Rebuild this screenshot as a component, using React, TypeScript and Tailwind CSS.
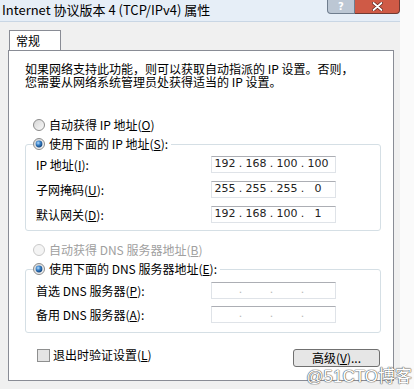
import type { ReactNode } from "react";

const cjk = "font-['Noto_Sans_CJK_SC',sans-serif]";

function Radio({ checked, disabled }: { checked?: boolean; disabled?: boolean }) {
  return (
    <svg width="12" height="12" viewBox="0 0 12 12" className="shrink-0">
      <defs>
        <linearGradient id="rg" x1="0" y1="0" x2="1" y2="1">
          <stop offset="0" stopColor="#d4d4d4" />
          <stop offset="1" stopColor="#fbfbfb" />
        </linearGradient>
        <radialGradient id="rb" cx="0.38" cy="0.35" r="0.7">
          <stop offset="0" stopColor="#b5ddff" />
          <stop offset="0.45" stopColor="#3a82c8" />
          <stop offset="1" stopColor="#0f3f77" />
        </radialGradient>
      </defs>
      <circle
        cx="6"
        cy="6"
        r="5.5"
        fill={disabled ? "#f4f4f4" : "url(#rg)"}
        stroke={disabled ? "#c9c9c9" : "#8b8b8b"}
      />
      {checked && <circle cx="6" cy="6" r="3.4" fill="url(#rb)" />}
    </svg>
  );
}

function Acc({ k }: { k: string }) {
  return (
    <>
      (<span className="underline">{k}</span>)
    </>
  );
}

function IpBox({ parts }: { parts?: string[] }) {
  return (
    <div className="flex h-[17px] w-[125px] items-center border border-[#dfe3e8] border-t-[#acaeb4] bg-white font-['DejaVu_Sans',sans-serif] text-[11px] text-[#222]">
      {[0, 1, 2, 3].map((i) => (
        <div key={i} className="flex items-center">
          {i > 0 && (
            <span className={`w-[5px] text-center ${parts ? "" : "text-[#b8b8b8]"}`}>.</span>
          )}
          <span className="w-[26px] text-center">{parts ? parts[i] : ""}</span>
        </div>
      ))}
    </div>
  );
}

function Row({ label, parts }: { label: ReactNode; parts?: string[] }) {
  return (
    <div className="flex h-[17px] items-center">
      <div className="w-[175px] whitespace-nowrap">{label}</div>
      <IpBox parts={parts} />
    </div>
  );
}

export default function App() {
  return (
    <div className={`relative flex h-[389px] w-[414px] overflow-hidden bg-[#fafafa] text-[12px] text-black ${cjk}`}>
      <div className="flex h-full w-[400px] flex-col bg-[#f0f0f0]">
        {/* title bar */}
        <div className="flex h-[22px] shrink-0 items-start border-b border-[#c9d6e4] bg-[#e6eef7]">
          <div className="pl-[2px] pt-[1px] text-[13px] leading-[18px] whitespace-nowrap text-black">
            Internet 协议版本 4 (TCP/IPv4) 属性
          </div>
          <div className="ml-auto flex shrink-0">
            <div className="flex h-[14px] w-[28px] items-center justify-center rounded-bl-[4px] border border-t-0 border-[#6f7d8e] bg-[#bcc7d4]">
              <span className="font-['DejaVu_Sans',sans-serif] text-[10px] font-bold leading-none text-white">
                ?
              </span>
            </div>
            <div className="flex h-[14px] w-[45px] items-center justify-center rounded-br-[4px] border border-t-0 border-l-0 border-[#6f3a33] bg-[#cf5a46]">
              <svg width="11" height="9" viewBox="0 0 11 9">
                <path d="M1.5 1 L9.5 8 M9.5 1 L1.5 8" stroke="#5a1f18" strokeWidth="3.2" strokeLinecap="round" />
                <path d="M1.5 1 L9.5 8 M9.5 1 L1.5 8" stroke="#ffffff" strokeWidth="1.8" strokeLinecap="round" />
              </svg>
            </div>
          </div>
        </div>

        {/* tab header */}
        <div className="ml-[9px] mt-[8px] flex h-[21px] w-[52px] items-center border border-b-0 border-[#898c95] bg-white pl-[6px]">
          常规
        </div>

        {/* panel */}
        <div className="-mt-[1px] ml-[8px] h-[331px] w-[386px] border border-[#898c95] bg-white">
          <p className="ml-[16px] mt-[11px] whitespace-nowrap leading-[13px]">
            如果网络支持此功能，则可以获取自动指派的 IP 设置。否则，
            <br />
            您需要从网络系统管理员处获得适当的 IP 设置。
          </p>

          <div className="ml-[24px] mt-[30px] flex h-[14px] items-center gap-[4px]">
            <Radio />
            <span>
              自动获得 IP 地址<Acc k="O" />
            </span>
          </div>

          <div className="ml-[16px] mt-[12px] h-[87px] w-[356px] rounded-[3px] border border-[#d5dfe5]">
            <div className="-mt-[8px] ml-[7px] flex h-[14px] w-fit items-center gap-[4px] bg-white pr-[3px]">
              <Radio checked />
              <span>
                使用下面的 IP 地址<Acc k="S" />:
              </span>
            </div>
            <div className="ml-[10px] mt-[5px] flex flex-col gap-[8px]">
              <Row label={<>IP 地址<Acc k="I" />:</>} parts={["192", "168", "100", "100"]} />
              <Row label={<>子网掩码<Acc k="U" />:</>} parts={["255", "255", "255", "0"]} />
              <Row label={<>默认网关<Acc k="D" />:</>} parts={["192", "168", "100", "1"]} />
            </div>
          </div>

          <div className="ml-[24px] mt-[12px] flex h-[14px] items-center gap-[4px] text-[#a0a0a0]">
            <Radio disabled />
            <span>
              自动获得 DNS 服务器地址<Acc k="B" />
            </span>
          </div>

          <div className="ml-[16px] mt-[12px] h-[64px] w-[356px] rounded-[3px] border border-[#d5dfe5]">
            <div className="-mt-[8px] ml-[7px] flex h-[14px] w-fit items-center gap-[4px] bg-white pr-[3px]">
              <Radio checked />
              <span>
                使用下面的 DNS 服务器地址<Acc k="E" />:
              </span>
            </div>
            <div className="ml-[10px] mt-[6px] flex flex-col gap-[7px]">
              <Row label={<>首选 DNS 服务器<Acc k="P" />:</>} />
              <Row label={<>备用 DNS 服务器<Acc k="A" />:</>} />
            </div>
          </div>

          <div className="ml-[28px] mr-[13px] mt-[15px] flex items-start">
            <div className="flex h-[14px] items-center gap-[3px]">
              <div className="h-[13px] w-[13px] border border-[#8e8f8f] bg-[#e4e4e4]" />
              <span>
                退出时验证设置<Acc k="L" />
              </span>
            </div>
            <button className="ml-auto mt-[1px] flex h-[18px] w-[87px] items-center justify-center rounded-[3px] border border-[#707070] bg-[#e6e6e6] text-[12px]">
              高级<Acc k="V" />...
            </button>
          </div>
        </div>
      </div>

      <div className="absolute bottom-[4px] right-[2px] font-['Liberation_Sans',sans-serif] text-[17px] leading-none text-white [text-shadow:0_0_1px_#555,0_0_1px_#555,0_0_1px_#555]">
        @51CTO<span className={cjk}>博客</span>
      </div>
    </div>
  );
}
